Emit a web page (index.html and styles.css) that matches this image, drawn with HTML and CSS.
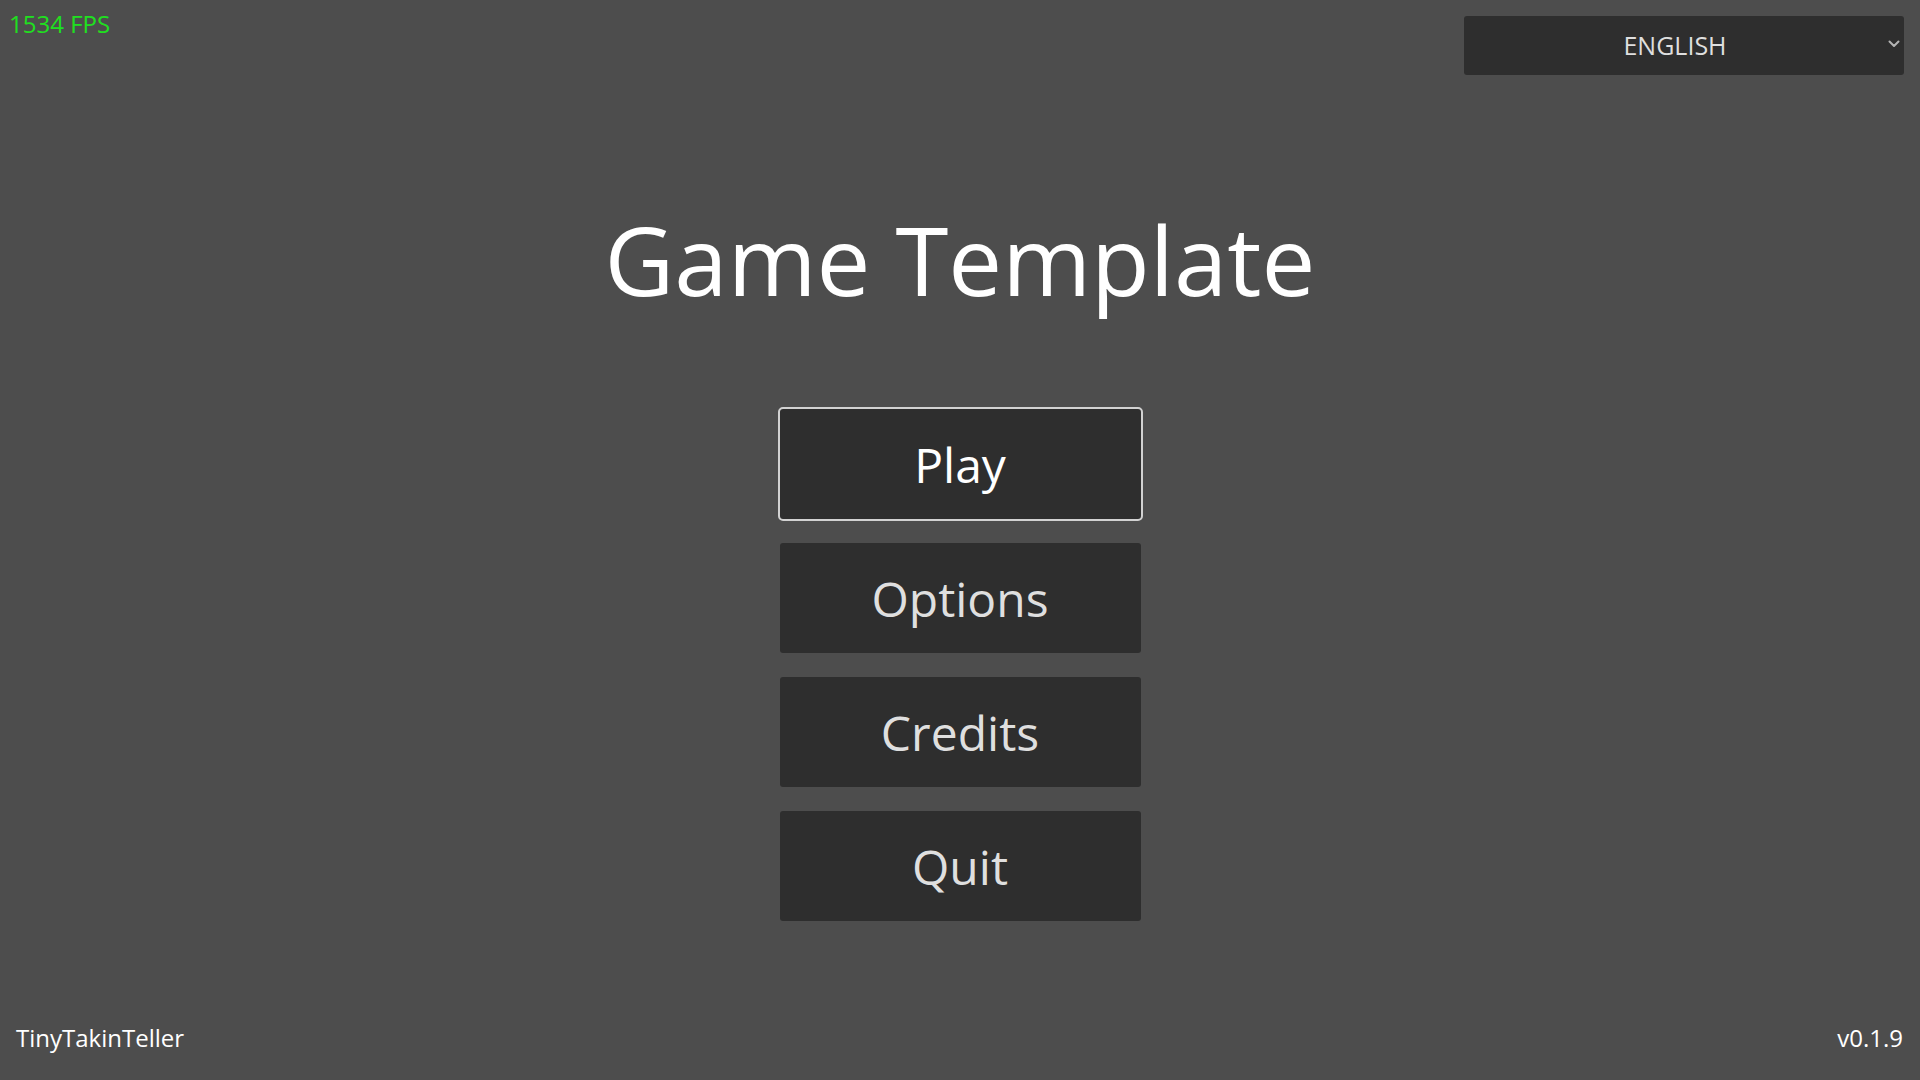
FILE: index.html
```html
<!DOCTYPE html>
<html lang="en">
<head>
<meta charset="utf-8">
<title>Game Template</title>
<link rel="stylesheet" href="styles.css">
</head>
<body>
<div class="screen">
  <header class="topbar">
    <div class="fps">1534 FPS</div>
    <div class="lang-select">
      <span class="lang-label">ENGLISH</span>
      <svg class="chevron" width="12" height="8" viewBox="0 0 12 8"><path d="M1.5 1.5 L6 6 L10.5 1.5" fill="none" stroke="#b3b3b3" stroke-width="2" stroke-linecap="round" stroke-linejoin="round"/></svg>
    </div>
  </header>
  <h1 class="title">Game Template</h1>
  <nav class="menu">
    <button class="menu-btn focused">Play</button>
    <button class="menu-btn">Options</button>
    <button class="menu-btn">Credits</button>
    <button class="menu-btn">Quit</button>
  </nav>
  <footer class="footer">
    <span class="author">TinyTakinTeller</span>
    <span class="version">v0.1.9</span>
  </footer>
</div>
</body>
</html>
```
FILE: styles.css
```css
html, body {
  margin: 0;
  padding: 0;
  background: #4d4d4d;
}
body {
  font-family: "Open Sans", "Noto Sans", sans-serif;
  color: #dfdfdf;
}
.screen {
  width: 1920px;
  height: 1080px;
  display: flex;
  flex-direction: column;
  align-items: center;
  box-sizing: border-box;
}
.topbar {
  align-self: stretch;
  display: flex;
  justify-content: space-between;
  align-items: flex-start;
  padding: 0 16px 0 9px;
  height: 75px;
}
.fps {
  color: #1fe01f;
  font-size: 24px;
  line-height: 34px;
  margin-top: 7px;
}
.lang-select {
  margin-top: 16px;
  width: 440px;
  height: 59px;
  background: #2e2e2e;
  border-radius: 3px;
  display: flex;
  align-items: center;
  justify-content: center;
  position: relative;
  box-sizing: border-box;
  padding-right: 18px;
}
.lang-label {
  font-size: 25px;
  line-height: 34px;
  color: #dfdfdf;
  margin-top: -2px;
}
.chevron {
  position: absolute;
  right: 4px;
  top: 24px;
}
.title {
  margin: 136px 0 0;
  font-size: 96px;
  line-height: 96px;
  font-weight: 400;
  color: #ffffff;
}
.menu {
  margin-top: 102px;
  display: flex;
  flex-direction: column;
  gap: 24px;
}
.menu-btn {
  width: 361px;
  height: 110px;
  background: #2e2e2e;
  border: none;
  border-radius: 3px;
  font-family: "Open Sans", "Noto Sans", sans-serif;
  font-size: 48px;
  color: #dfdfdf;
  padding: 0;
  display: flex;
  align-items: center;
  justify-content: center;
}
.menu-btn.focused {
  color: #ffffff;
  outline: 2px solid rgba(255, 255, 255, 0.75);
  outline-offset: 0;
  border-radius: 3px;
}
.footer {
  margin-top: auto;
  align-self: stretch;
  display: flex;
  justify-content: space-between;
  padding: 0 17px 25px 16px;
  font-size: 24px;
  line-height: 34px;
  color: #ffffff;
}
```
